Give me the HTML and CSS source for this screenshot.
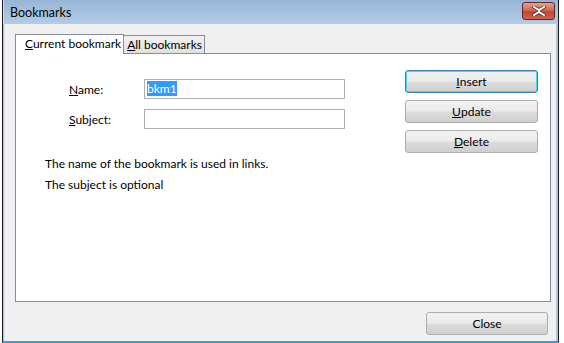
FILE: index.html
```html
<!DOCTYPE html>
<html>
<head>
<meta charset="utf-8">
<link rel="stylesheet" href="styles.css">
</head>
<body>
<div class="window">
  <div class="titlebar">
    <span class="title">Bookmarks</span>
    <div class="close-x">
      <svg width="16" height="10" viewBox="0 0 16 10"><path d="M3 1 L8 4 L13 1 M3 9 L8 6 L13 9" stroke="#4a2a2a" stroke-width="3.4" fill="none" stroke-linecap="square"/><path d="M3 1 L8 4 L13 1 M3 9 L8 6 L13 9" stroke="#fff" stroke-width="2" fill="none" stroke-linecap="square"/></svg>
    </div>
  </div>
  <div class="client">
    <div class="tabs">
      <div class="tab active"><u>C</u>urrent bookmark</div>
      <div class="tab"><u>A</u>ll bookmarks</div>
    </div>
    <div class="panel">
      <div class="left">
        <div class="form">
          <label><u>N</u>ame:</label>
          <div class="input"><span class="sel">bkm1</span></div>
          <label><u>S</u>ubject:</label>
          <div class="input"></div>
        </div>
        <p class="note">The name of the bookmark is used in links.</p>
        <p class="note">The subject is optional</p>
      </div>
      <div class="buttons">
        <div class="btn default"><u>I</u>nsert</div>
        <div class="btn"><u>U</u>pdate</div>
        <div class="btn"><u>D</u>elete</div>
      </div>
    </div>
    <div class="footer">
      <div class="btn close">Close</div>
    </div>
  </div>
</div>
</body>
</html>
```
FILE: styles.css
```css
html, body { margin: 0; padding: 0; background: #ffffff; }
body { font-family: "Lato", "Noto Sans", sans-serif; font-size: 12px; color: #000; }
.window {
  margin-left: 2px;
  border-left: 1px solid #1a1a1a;
  border-right: 1px solid #1a1a1a;
  border-bottom: 2px solid #27a9d8;
  background: #a9c5e2;
  display: flex;
  flex-direction: column;
  box-sizing: border-box;
  width: 557px;
  height: 343px;
}
.titlebar {
  height: 24px;
  background: linear-gradient(#97b5d6, #b3cce6);
  display: flex;
  align-items: center;
  justify-content: space-between;
  padding: 0 3px 0 6px;
  border-left: 1px solid #cfe0f0;
}
.title { font-size: 12.5px; color: #000; padding-top: 1px; }
.close-x {
  width: 31px; height: 16px;
  margin-top: -3px;
  border: 1px solid #5e2a2a;
  border-radius: 3px;
  background: linear-gradient(#e4a191 0%, #d36a55 45%, #c2452e 55%, #d0644f 100%);
  display: flex; align-items: center; justify-content: center;
}
.client {
  flex: 1;
  background: #f0f0f0;
  margin: 0 2px 0 1px;
  border-left: 1px solid #d9e6f2;
  display: flex;
  flex-direction: column;
  padding: 10px 5px 0 10px;
}
.tabs { display: flex; align-items: flex-end; height: 19px; white-space: nowrap; }
.tab {
  box-sizing: border-box;
  height: 18px;
  border: 1px solid #898c95;
  border-bottom: none;
  padding: 1px 2px 0 3px;
  background: linear-gradient(#f2f2f2, #e0e0e0);
  line-height: 15px;
  margin-left: -1px;
  white-space: nowrap;
}
.tab.active {
  height: 20px;
  background: #fff;
  padding: 1px 2px 0 9px;
  margin-left: 0;
  position: relative;
  z-index: 1;
  margin-bottom: -1px;
}
.panel {
  height: 249px;
  box-sizing: border-box;
  background: #fff;
  border: 1px solid #898c95;
  display: flex;
  justify-content: space-between;
  padding: 16px 12px 0 29px;
}
.form {
  display: grid;
  grid-template-columns: 99px 201px;
  row-gap: 10px;
  align-items: center;
  margin-top: 9px;
}
.form label { padding-left: 24px; }
.input {
  box-sizing: border-box;
  height: 20px;
  border: 1px solid #abadb3;
  padding: 1px 2px;
  line-height: 16px;
}
.sel { background: #3399ff; color: #fff; }
.note { margin: 0; white-space: nowrap; }
.note:first-of-type { margin-top: 27px; }
.note + .note { margin-top: 6px; }
.buttons { display: flex; flex-direction: column; gap: 7px; }
.btn {
  box-sizing: border-box;
  width: 133px;
  height: 23px;
  border: 1px solid #adadad;
  border-radius: 3px;
  background: linear-gradient(#f2f2f2 0%, #ebebeb 49%, #dddddd 51%, #cfcfcf 100%);
  display: flex; align-items: center; justify-content: center;
}
.btn.default {
  border-color: #3c7fb1;
  box-shadow: inset 0 0 0 1px #48d3fc;
}
.footer {
  flex: 1;
  display: flex;
  justify-content: flex-end;
  align-items: flex-start;
  padding-top: 10px;
  padding-right: 3px;
}
.btn.close { width: 122px; }
```
